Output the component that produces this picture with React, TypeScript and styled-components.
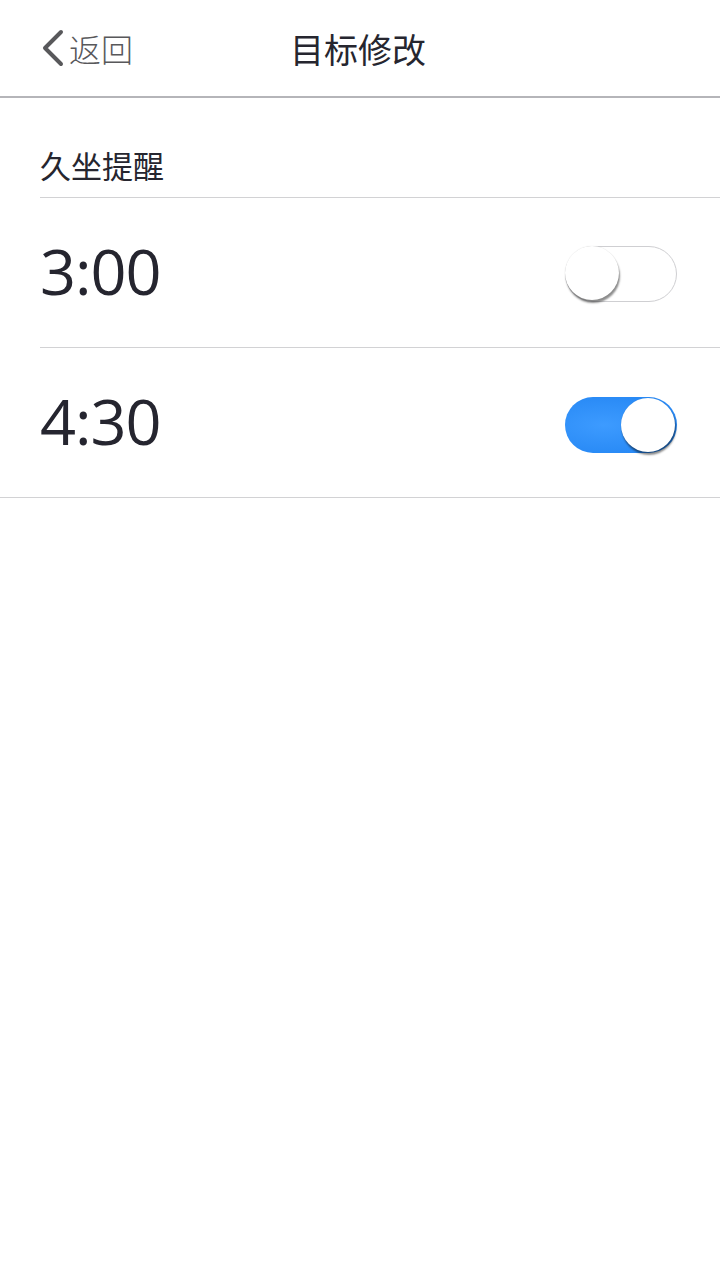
import React from "react";
import styled, { createGlobalStyle } from "styled-components";

const Global = createGlobalStyle`
  html, body { margin: 0; padding: 0; background: #fff; }
  body { font-family: "Open Sans", "Noto Sans CJK SC", sans-serif; }
`;

const Page = styled.div`
  width: 720px;
  min-height: 1280px;
  background: #fff;
`;

const Header = styled.header`
  position: relative;
  height: 96px;
  display: flex;
  align-items: center;
  justify-content: center;
  border-bottom: 2px solid #b5b5b9;
`;

const Back = styled.div`
  position: absolute;
  left: 40px;
  top: 0;
  height: 96px;
  display: flex;
  align-items: center;
  gap: 5px;
  color: #58585b;
  font-family: "Noto Sans CJK SC", sans-serif;
  font-size: 32px;
  font-weight: 300;
`;

const Title = styled.h1`
  margin: 0 0 0 -4px;
  font-family: "Noto Sans CJK SC", sans-serif;
  font-weight: 400;
  font-size: 34px;
  color: #26262f;
`;

const SectionLabel = styled.div`
  margin-left: 40px;
  padding-top: 47px;
  height: 52px;
  font-family: "Noto Sans CJK SC", sans-serif;
  font-size: 31px;
  line-height: 40px;
  color: #26262f;
  border-bottom: 1px solid #d2d2d4;
  box-sizing: content-box;
`;

const Row = styled.div<{ $inset?: boolean }>`
  height: 149px;
  margin-left: ${(p) => (p.$inset ? "40px" : "0")};
  padding-left: ${(p) => (p.$inset ? "0" : "40px")};
  padding-right: 43px;
  display: flex;
  align-items: center;
  justify-content: space-between;
  border-bottom: 1px solid #d2d2d4;
`;

const Time = styled.div`
  font-family: "Open Sans", sans-serif;
  font-size: 63px;
  color: #25252f;
  letter-spacing: -1px;
  margin-left: 0;
  margin-top: -4px;
`;

const Track = styled.div<{ $on: boolean }>`
  position: relative;
  width: 112px;
  height: 56px;
  border-radius: 28px;
  box-sizing: border-box;
  border: ${(p) => (p.$on ? "none" : "1px solid #cfcfd2")};
  background: ${(p) =>
    p.$on ? "radial-gradient(ellipse at 35% 50%, #3d9bff 0%, #2a8bf6 70%, #2787f3 100%)" : "#fff"};
  margin-top: ${(p) => (p.$on ? "5px" : "2px")};
`;

const Knob = styled.div<{ $on: boolean }>`
  position: absolute;
  top: ${(p) => (p.$on ? "1px" : "-1px")};
  left: ${(p) => (p.$on ? "56px" : "-1px")};
  width: 54px;
  height: 54px;
  border-radius: 50%;
  background: #fff;
  box-shadow: 1px 3px 2px rgba(0, 0, 0, 0.45), 0 0 1px rgba(0, 0, 0, 0.15);
`;

const Toggle = ({ on }: { on: boolean }) => (
  <Track $on={on}>
    <Knob $on={on} />
  </Track>
);

export default function App() {
  return (
    <Page>
      <Global />
      <Header>
        <Back>
          <svg width="24" height="38" viewBox="0 0 24 38">
            <path d="M21 3 L5 19 L21 35" fill="none" stroke="#58585b" strokeWidth="4" strokeLinecap="round" strokeLinejoin="round" />
          </svg>
          <span>返回</span>
        </Back>
        <Title>目标修改</Title>
      </Header>
      <SectionLabel>久坐提醒</SectionLabel>
      <Row $inset>
        <Time>3:00</Time>
        <Toggle on={false} />
      </Row>
      <Row>
        <Time>4:30</Time>
        <Toggle on={true} />
      </Row>
    </Page>
  );
}
